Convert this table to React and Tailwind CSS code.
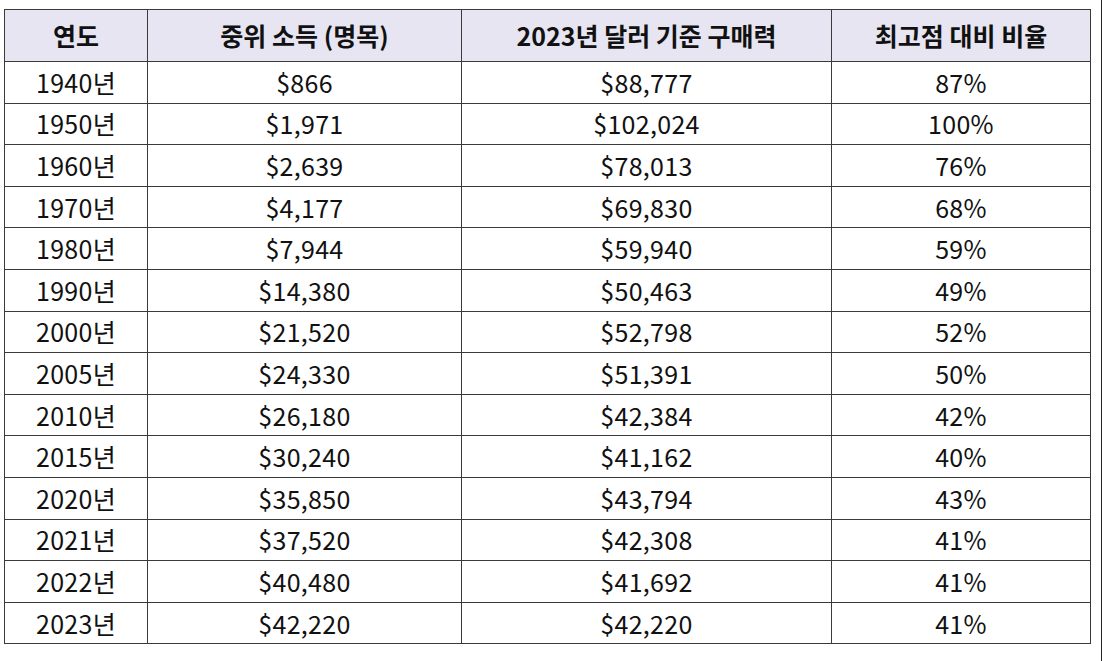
import React from "react";

const rows = [
  ["1940년", "$866", "$88,777", "87%"],
  ["1950년", "$1,971", "$102,024", "100%"],
  ["1960년", "$2,639", "$78,013", "76%"],
  ["1970년", "$4,177", "$69,830", "68%"],
  ["1980년", "$7,944", "$59,940", "59%"],
  ["1990년", "$14,380", "$50,463", "49%"],
  ["2000년", "$21,520", "$52,798", "52%"],
  ["2005년", "$24,330", "$51,391", "50%"],
  ["2010년", "$26,180", "$42,384", "42%"],
  ["2015년", "$30,240", "$41,162", "40%"],
  ["2020년", "$35,850", "$43,794", "43%"],
  ["2021년", "$37,520", "$42,308", "41%"],
  ["2022년", "$40,480", "$41,692", "41%"],
  ["2023년", "$42,220", "$42,220", "41%"],
];

const headers = ["연도", "중위 소득 (명목)", "2023년 달러 기준 구매력", "최고점 대비 비율"];

export default function App() {
  return (
    <div className="w-[1102px] h-[661px] bg-white border-r border-[#222] pl-[4px] pt-[9px] font-['Noto_Sans_CJK_KR',sans-serif] text-[#111]">
      <table className="table-fixed border-collapse w-[1086px]">
        <colgroup>
          <col className="w-[143px]" />
          <col className="w-[314px]" />
          <col className="w-[370px]" />
          <col className="w-[259px]" />
        </colgroup>
        <thead>
          <tr className="h-[52px] bg-[#e6e5f1]">
            {headers.map((h) => (
              <th
                key={h}
                className="border-[1.5px] border-[#3a3a3a] text-[25px] font-bold text-center align-middle p-0 leading-none"
              >
                {h}
              </th>
            ))}
          </tr>
        </thead>
        <tbody>
          {rows.map((r) => (
            <tr key={r[0]} className="h-[41.6px]">
              {r.map((c, i) => (
                <td
                  key={i}
                  className="border-[1.5px] border-[#3a3a3a] text-[25px] text-center align-middle p-0 leading-none tracking-[0.3px]"
                >
                  {c}
                </td>
              ))}
            </tr>
          ))}
        </tbody>
      </table>
    </div>
  );
}
